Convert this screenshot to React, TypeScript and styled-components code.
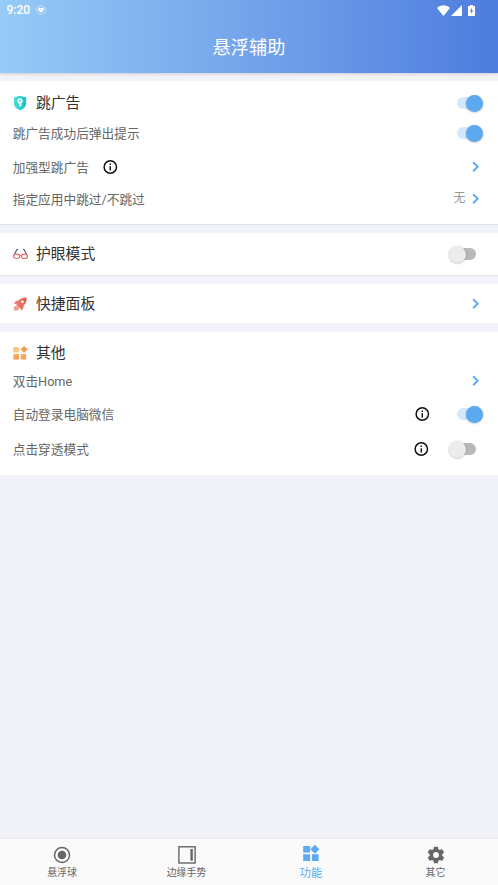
import React from "react";
import styled, { createGlobalStyle } from "styled-components";

const GlobalStyle = createGlobalStyle`
  * { box-sizing: border-box; }
  body { margin: 0; background: #f2f3f8; font-family: Roboto, "Noto Sans CJK SC", sans-serif; }
  svg { display: block; flex: none; }
`;

const Screen = styled.div`
  height: 885px;
  display: flex;
  flex-direction: column;
  overflow: hidden;
`;

const Header = styled.header`
  height: 73px;
  flex: none;
  color: #fff;
  background: linear-gradient(90deg, #96caf7 0%, #73a4ea 50%, #4e7cdf 100%);
  box-shadow: 0 1px 3px rgba(0, 0, 0, 0.16);
`;

const StatusBar = styled.div`
  height: 20px;
  display: flex;
  align-items: center;
  justify-content: space-between;
  padding: 0 23px 0 6.5px;
`;

const StatusGroup = styled.div<{ $gap: number }>`
  display: flex;
  align-items: center;
  gap: ${(p) => p.$gap}px;
`;

const Clock = styled.span`
  font-size: 12px;
  line-height: 20px;
  font-weight: 500;
`;

const Title = styled.h1`
  margin: 15px 0 0;
  font-size: 18.2px;
  line-height: 26px;
  font-weight: 400;
  text-align: center;
`;

const Content = styled.main`
  flex: 1;
  padding-top: 8px;
`;

const Card = styled.section<{ $height: number; $pad: number; $gap: number; $line?: boolean }>`
  height: ${(p) => p.$height}px;
  margin-bottom: ${(p) => p.$gap}px;
  padding: ${(p) => p.$pad}px 16px 0 13px;
  background: #fff;
  box-shadow: ${(p) => (p.$line ? "0 1px 0 #e3e4e9" : "none")};
`;

const Row = styled.div<{ $top?: number }>`
  height: 24px;
  margin-top: ${(p) => p.$top ?? 0}px;
  display: flex;
  align-items: center;
`;

const IconSlot = styled.span`
  width: 14px;
  flex: none;
`;

const Heading = styled.h2`
  margin: 0 0 0 9px;
  font-size: 14.8px;
  line-height: 24px;
  font-weight: 400;
  color: #333;
`;

const Label = styled.span`
  font-size: 12.7px;
  line-height: 24px;
  padding-top: 1px;
  margin-left: -0.3px;
  color: #666;
`;

const InfoSlot = styled.span<{ $left?: number; $right?: number }>`
  margin-left: ${(p) => (p.$left ? `${p.$left}px` : "auto")};
  margin-right: ${(p) => p.$right ?? 0}px;
`;

const Trailing = styled.div`
  margin-left: auto;
  display: flex;
  align-items: center;
`;

const Value = styled.span`
  font-size: 12px;
  line-height: 20px;
  color: #999;
  margin: -2px 3.5px 0 0;
`;

const Track = styled.span<{ $on: boolean }>`
  width: ${(p) => (p.$on ? 26 : 26.5)}px;
  height: 12px;
  margin-right: ${(p) => (p.$on ? -0.5 : 6.5)}px;
  display: flex;
  align-items: center;
  justify-content: ${(p) => (p.$on ? "flex-end" : "flex-start")};
  border-radius: 6px;
  background: ${(p) => (p.$on ? "#d3e8fc" : "linear-gradient(90deg, transparent 8px, #b9b9b9 8px)")};
`;

const Thumb = styled.span<{ $on: boolean }>`
  width: 17px;
  height: 17px;
  flex: none;
  border-radius: 50%;
  background: ${(p) => (p.$on ? "#5ba9ef" : "#ececec")};
  box-shadow: 0 0.5px 2px rgba(0, 0, 0, 0.3);
`;

const Nav = styled.nav`
  height: 46px;
  flex: none;
  display: grid;
  grid-template-columns: repeat(4, 1fr);
  background: #fafafa;
  box-shadow: 0 -1px 2px rgba(0, 0, 0, 0.05);
`;

const Tab = styled.div<{ $active?: boolean }>`
  display: flex;
  flex-direction: column;
  align-items: center;
  padding-top: ${(p) => (p.$active ? 5 : 7)}px;
  margin-left: -0.5px;
  color: ${(p) => (p.$active ? "#5eaaf3" : "#666")};
`;

const TabIcon = styled.span`
  height: 18px;
  display: flex;
  align-items: center;
`;

const TabLabel = styled.span<{ $active?: boolean }>`
  font-size: ${(p) => (p.$active ? 11.4 : 9.9)}px;
  line-height: 16px;
  margin-top: ${(p) => (p.$active ? 3 : 1)}px;
`;

const Toggle = ({ on = false }: { on?: boolean }) => (
  <Track $on={on}>
    <Thumb $on={on} />
  </Track>
);

const Chevron = () => (
  <svg width="13" height="12" viewBox="0 0 13 12">
    <path d="M4.100 1.200 8.700 5.700 4.100 10.200" fill="none" stroke="#5eaaf3" strokeWidth="1.900" />
  </svg>
);

const Info = () => (
  <svg width="15" height="15" viewBox="0 0 15 15">
    <circle cx="7.300" cy="7" r="6.200" fill="none" stroke="#111" strokeWidth="1.450" />
    <path d="M7.300 6.200v4.200M7.300 3.400v1.500" stroke="#111" strokeWidth="1.400" />
  </svg>
);

const AppBadge = () => (
  <svg width="10" height="10" viewBox="0 0 10 10">
    <circle cx="5" cy="5" r="4.400" fill="none" stroke="#fff" strokeOpacity=".55" strokeWidth=".8" />
    <path d="M2 3.500 3.500 2.600 5 3.200l1.500-.6L8 3.500 7.300 5.600 5 7.800 2.700 5.600z" fill="#fff" />
    <path d="M5 4v1.400" stroke="#8ac0f4" strokeWidth=".8" />
  </svg>
);

const Wifi = () => (
  <svg width="13" height="11" viewBox="0 0 13 11">
    <path d="M0 3C3.600-.7 9.400-.7 13 3L6.500 11z" fill="#fff" />
  </svg>
);

const Signal = () => (
  <svg width="11" height="11" viewBox="0 0 11 11">
    <path d="M11 0v11H0z" fill="#fff" />
  </svg>
);

const Battery = () => (
  <svg width="7" height="11" viewBox="0 0 7 11">
    <path d="M2 0h3v1h2v10H0V1h2z" fill="#fff" />
    <path d="M3.800 2.500 1.800 6.400h1.400v2.700l2-3.800H3.800z" fill="#5885e2" />
  </svg>
);

const ShieldIcon = () => (
  <svg width="14" height="16" viewBox="0 0 14 16">
    <defs>
      <linearGradient id="shield" x1="0" x2="1">
        <stop offset="0" stopColor="#49dfda" />
        <stop offset="1" stopColor="#17bfc2" />
      </linearGradient>
    </defs>
    <path d="M7 .8 13.200 2.600V8c0 3.500-2.300 5.800-6.200 7.300C3.100 13.800.9 11.500.9 8V2.600z" fill="url(#shield)" />
    <circle cx="7" cy="5.900" r="2" fill="#8ae9e7" stroke="#fff" strokeWidth="1.300" />
    <path d="M7 8v3.500M7 10h1.500" stroke="#fff" strokeWidth="1.300" />
  </svg>
);

const GlassesIcon = () => (
  <svg width="15" height="12" viewBox="0 0 15 12" fill="none">
    <path d="M1.500 6 4 1.500 5 1.200M13.500 6 11 1.500 10 1.200" stroke="#53566e" strokeWidth="1.100" />
    <ellipse cx="3.600" cy="8.300" rx="3.100" ry="2.200" stroke="#ec675e" strokeWidth="1.100" />
    <ellipse cx="11.400" cy="8.300" rx="3.100" ry="2.200" stroke="#ec675e" strokeWidth="1.100" />
    <path d="M6.600 7.800q.9-.7 1.800 0" stroke="#ec675e" />
  </svg>
);

const RocketIcon = () => (
  <svg width="15" height="14" viewBox="0 0 15 14">
    <defs>
      <linearGradient id="rocket" x1="0" x2="1">
        <stop offset="0" stopColor="#f18a76" />
        <stop offset="1" stopColor="#dd5c50" />
      </linearGradient>
    </defs>
    <path d="M13.700.5C9.800.4 7.500 1.700 5.600 3.600 3.700 3.200 1.800 4.300.8 6.800l2.900.1-.5 1.900 2.500 2.400 1.700-.5.300 2.900c2.500-1.200 3.300-3.100 2.800-5.100C12.900 6.500 13.800 4.100 13.700.5z" fill="url(#rocket)" />
    <path d="M2.600 9 .9 10.300v3.200l4-.1 1-1.500z" fill="#f18a76" />
    <circle cx="9.500" cy="4.800" r="1.200" fill="#fff" />
    <path d="m.9 12.200 1.800-1.400M2.600 13.500l1.800-1.500" stroke="#fff" strokeWidth=".5" />
  </svg>
);

const WidgetsOrange = () => (
  <svg width="15" height="14" viewBox="0 0 15 14">
    <defs>
      <linearGradient id="amber" x1="0" x2="1" y2="1">
        <stop offset="0" stopColor="#f4bd75" />
        <stop offset="1" stopColor="#ee9548" />
      </linearGradient>
    </defs>
    <rect x=".2" y="1.100" width="5.900" height="5.400" rx=".7" fill="#f7c987" />
    <rect x=".2" y="8.100" width="5.900" height="5.500" rx=".7" fill="url(#amber)" />
    <rect x="7.600" y="8.100" width="5.500" height="5.500" rx=".7" fill="url(#amber)" />
    <path d="m11.100.3 3.200 3.100-3.200 3.200L7.800 3.400z" fill="#f19d4e" stroke="#f19d4e" strokeWidth=".5" strokeLinejoin="round" />
  </svg>
);

const BallIcon = () => (
  <svg width="18" height="18" viewBox="0 0 18 18">
    <circle cx="9" cy="9" r="7.500" fill="none" stroke="#666" strokeWidth="1.500" />
    <circle cx="9" cy="9" r="4.300" fill="#666" />
  </svg>
);

const EdgeIcon = () => (
  <svg width="18" height="18" viewBox="0 0 18 18">
    <rect x=".9" y=".8" width="16.200" height="16.200" fill="none" stroke="#666" strokeWidth="1.400" />
    <path d="M13.600 3v11.700" stroke="#666" strokeWidth="2.400" />
  </svg>
);

const WidgetsIcon = () => (
  <svg width="18" height="18" viewBox="0 0 18 18" fill="currentColor">
    <path d="M1.200 2h6.900v6.600H1.200zM1.200 10.200h6.900v6.800H1.200zM10 10.200h6.600v6.800H10zM12.900.8l4.500 4.400-4.500 4.600-4.600-4.600z" />
  </svg>
);

const GearIcon = () => (
  <svg width="20" height="20" viewBox="0 0 24 24" fill="currentColor">
    <path d="M19.400 13a7.600 7.600 0 0 0 0-2l2.100-1.600a.5.500 0 0 0 .1-.7l-2-3.400a.5.500 0 0 0-.6-.2l-2.500 1a7.400 7.400 0 0 0-1.700-1l-.4-2.600a.5.500 0 0 0-.5-.5h-4a.5.500 0 0 0-.5.500L9 5.100a7.400 7.400 0 0 0-1.700 1l-2.500-1a.5.500 0 0 0-.6.200l-2 3.400a.5.500 0 0 0 .1.700L4.500 11a7.600 7.600 0 0 0 0 2l-2.200 1.600a.5.500 0 0 0-.1.700l2 3.400c.1.200.4.300.6.200l2.500-1a7.400 7.400 0 0 0 1.700 1l.4 2.600c0 .300.200.500.500.500h4c.300 0 .500-.200.500-.500l.4-2.600a7.400 7.400 0 0 0 1.700-1l2.500 1c.200.100.500 0 .6-.200l2-3.400a.5.500 0 0 0-.1-.7zM12 15.500a3.500 3.500 0 1 1 0-7 3.500 3.500 0 0 1 0 7z" />
  </svg>
);

export default function App() {
  return (
    <>
      <GlobalStyle />
      <Screen>
        <Header>
          <StatusBar>
            <StatusGroup $gap={6}>
              <Clock>9:20</Clock>
              <AppBadge />
            </StatusGroup>
            <StatusGroup $gap={6}>
              <StatusGroup $gap={1}>
                <Wifi />
                <Signal />
              </StatusGroup>
              <Battery />
            </StatusGroup>
          </StatusBar>
          <Title>悬浮辅助</Title>
        </Header>

        <Content>
          <Card $height={143} $pad={10} $gap={9} $line>
            <Row>
              <IconSlot><ShieldIcon /></IconSlot>
              <Heading>跳广告</Heading>
              <Trailing><Toggle on /></Trailing>
            </Row>
            <Row $top={6}>
              <Label>跳广告成功后弹出提示</Label>
              <Trailing><Toggle on /></Trailing>
            </Row>
            <Row $top={10}>
              <Label>加强型跳广告</Label>
              <InfoSlot $left={14}><Info /></InfoSlot>
              <Trailing><Chevron /></Trailing>
            </Row>
            <Row $top={8}>
              <Label>指定应用中跳过/不跳过</Label>
              <Trailing>
                <Value>无</Value>
                <Chevron />
              </Trailing>
            </Row>
          </Card>

          <Card $height={42} $pad={9} $gap={9} $line>
            <Row>
              <IconSlot><GlassesIcon /></IconSlot>
              <Heading>护眼模式</Heading>
              <Trailing><Toggle /></Trailing>
            </Row>
          </Card>

          <Card $height={39} $pad={8} $gap={9}>
            <Row>
              <IconSlot><RocketIcon /></IconSlot>
              <Heading>快捷面板</Heading>
              <Trailing><Chevron /></Trailing>
            </Row>
          </Card>

          <Card $height={143} $pad={9} $gap={0}>
            <Row>
              <IconSlot><WidgetsOrange /></IconSlot>
              <Heading>其他</Heading>
            </Row>
            <Row $top={4}>
              <Label>双击Home</Label>
              <Trailing><Chevron /></Trailing>
            </Row>
            <Row $top={9}>
              <Label>自动登录电脑微信</Label>
              <InfoSlot $right={27}><Info /></InfoSlot>
              <Toggle on />
            </Row>
            <Row $top={11}>
              <Label>点击穿透模式</Label>
              <InfoSlot $right={20}><Info /></InfoSlot>
              <Toggle />
            </Row>
          </Card>
        </Content>

        <Nav>
          <Tab>
            <TabIcon><BallIcon /></TabIcon>
            <TabLabel>悬浮球</TabLabel>
          </Tab>
          <Tab>
            <TabIcon><EdgeIcon /></TabIcon>
            <TabLabel>边缘手势</TabLabel>
          </Tab>
          <Tab $active>
            <TabIcon><WidgetsIcon /></TabIcon>
            <TabLabel $active>功能</TabLabel>
          </Tab>
          <Tab>
            <TabIcon><GearIcon /></TabIcon>
            <TabLabel>其它</TabLabel>
          </Tab>
        </Nav>
      </Screen>
    </>
  );
}
